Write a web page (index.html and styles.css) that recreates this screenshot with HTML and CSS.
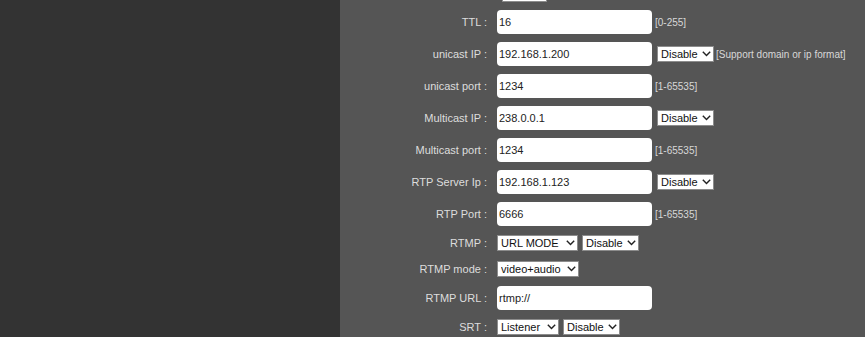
FILE: index.html
```html
<!DOCTYPE html>
<html>
<head>
	<meta charset="utf-8">
	<title>Stream settings</title>
	<link rel="stylesheet" href="styles.css">
</head>
<body>
	<div class="page">
		<aside class="side"></aside>

		<main class="content">
			<div class="form">
				<!-- row above, scrolled out of view -->
				<div class="row sm">
					<span class="lbl"></span>
					<span class="sel w-top"><select><option>On</option></select></span>
				</div>

				<div class="row">
					<span class="lbl">TTL :</span>
					<input class="txt" type="text" value="16">
					<span class="hint">[0-255]</span>
				</div>
				<div class="row">
					<span class="lbl">unicast IP :</span>
					<input class="txt" type="text" value="192.168.1.200">
					<span class="sel w-dis"><select><option>Disable</option><option>Enable</option></select><svg width="9" height="6" viewBox="0 0 9 6"><path d="M0.8 0.8 L4.5 4.6 L8.2 0.8" fill="none" stroke="#222" stroke-width="1.4"/></svg></span>
					<span class="hint tight">[Support domain or ip format]</span>
				</div>
				<div class="row">
					<span class="lbl">unicast port :</span>
					<input class="txt" type="text" value="1234">
					<span class="hint">[1-65535]</span>
				</div>
				<div class="row">
					<span class="lbl">Multicast IP :</span>
					<input class="txt" type="text" value="238.0.0.1">
					<span class="sel w-dis"><select><option>Disable</option><option>Enable</option></select><svg width="9" height="6" viewBox="0 0 9 6"><path d="M0.8 0.8 L4.5 4.6 L8.2 0.8" fill="none" stroke="#222" stroke-width="1.4"/></svg></span>
				</div>
				<div class="row">
					<span class="lbl">Multicast port :</span>
					<input class="txt" type="text" value="1234">
					<span class="hint">[1-65535]</span>
				</div>
				<div class="row">
					<span class="lbl">RTP Server Ip :</span>
					<input class="txt" type="text" value="192.168.1.123">
					<span class="sel w-dis"><select><option>Disable</option><option>Enable</option></select><svg width="9" height="6" viewBox="0 0 9 6"><path d="M0.8 0.8 L4.5 4.6 L8.2 0.8" fill="none" stroke="#222" stroke-width="1.4"/></svg></span>
				</div>
				<div class="row">
					<span class="lbl">RTP Port :</span>
					<input class="txt" type="text" value="6666">
					<span class="hint">[1-65535]</span>
				</div>

				<div class="row sm">
					<span class="lbl">RTMP :</span>
					<span class="sel w-mode first"><select><option>URL MODE</option></select><svg width="9" height="6" viewBox="0 0 9 6"><path d="M0.8 0.8 L4.5 4.6 L8.2 0.8" fill="none" stroke="#222" stroke-width="1.4"/></svg></span>
					<span class="sel w-dis"><select><option>Disable</option><option>Enable</option></select><svg width="9" height="6" viewBox="0 0 9 6"><path d="M0.8 0.8 L4.5 4.6 L8.2 0.8" fill="none" stroke="#222" stroke-width="1.4"/></svg></span>
				</div>
				<div class="row sm">
					<span class="lbl">RTMP mode :</span>
					<span class="sel w-av first"><select><option>video+audio</option></select><svg width="9" height="6" viewBox="0 0 9 6"><path d="M0.8 0.8 L4.5 4.6 L8.2 0.8" fill="none" stroke="#222" stroke-width="1.4"/></svg></span>
				</div>
				<div class="row">
					<span class="lbl">RTMP URL :</span>
					<input class="txt" type="text" value="rtmp://">
				</div>
				<div class="row sm">
					<span class="lbl">SRT :</span>
					<span class="sel w-lis first"><select><option>Listener</option><option>Caller</option></select><svg width="9" height="6" viewBox="0 0 9 6"><path d="M0.8 0.8 L4.5 4.6 L8.2 0.8" fill="none" stroke="#222" stroke-width="1.4"/></svg></span>
					<span class="sel w-dis"><select><option>Disable</option><option>Enable</option></select><svg width="9" height="6" viewBox="0 0 9 6"><path d="M0.8 0.8 L4.5 4.6 L8.2 0.8" fill="none" stroke="#222" stroke-width="1.4"/></svg></span>
				</div>
			</div>
		</main>
	</div>
</body>
</html>
```

FILE: styles.css
```css
html, body {
	margin: 0;
	height: 100%;
	overflow: hidden;
	font-family: "Liberation Sans", Arial, sans-serif;
	font-size: 11px;
}

.page {
	display: flex;
	height: 100%;
}

.side {
	width: 340px;
	flex: none;
	background-color: #333333;
}

.content {
	flex: 1;
	background-color: #555555;
}

.form {
	margin-top: -18px;
}

.row {
	display: flex;
	align-items: center;
	height: 32px;
}
.row.sm {
	height: 26px;
}
.row:first-child {
	height: 24px;
}

.lbl {
	width: 147px;
	margin-right: 10px;
	flex: none;
	text-align: right;
	color: #dddddd;
	white-space: nowrap;
}

.txt {
	box-sizing: border-box;
	width: 155px;
	height: 24px;
	margin: 0;
	padding: 0 2px;
	border: 0;
	border-radius: 4px;
	background: #ffffff;
	color: #222222;
	font-family: inherit;
	font-size: 11px;
	outline: none;
}

.hint {
	margin-left: 3px;
	color: #d8d8d8;
	font-size: 10px;
	white-space: nowrap;
}
.hint.tight {
	margin-left: 2px;
}

.sel {
	box-sizing: border-box;
	display: flex;
	align-items: center;
	height: 16px;
	margin-left: 5px;
	padding: 0 2px 0 3px;
	border: 1px solid #8c8c8c;
	background: #ffffff;
}
.sel.first {
	margin-left: 0;
}
.sel + .sel {
	margin-left: 4px;
}
.sel select {
	flex: 1;
	min-width: 0;
	height: 14px;
	margin: 0;
	padding: 0;
	border: 0;
	background: transparent;
	color: #111111;
	font-family: inherit;
	font-size: 11px;
	line-height: 14px;
	-webkit-appearance: none;
	appearance: none;
	outline: none;
}
.sel svg {
	flex: none;
	margin-left: 3px;
}

.w-top { width: 45px; }
.w-dis { width: 57px; }
.w-mode { width: 81px; }
.w-av { width: 82px; }
.w-lis { width: 62px; }
```
